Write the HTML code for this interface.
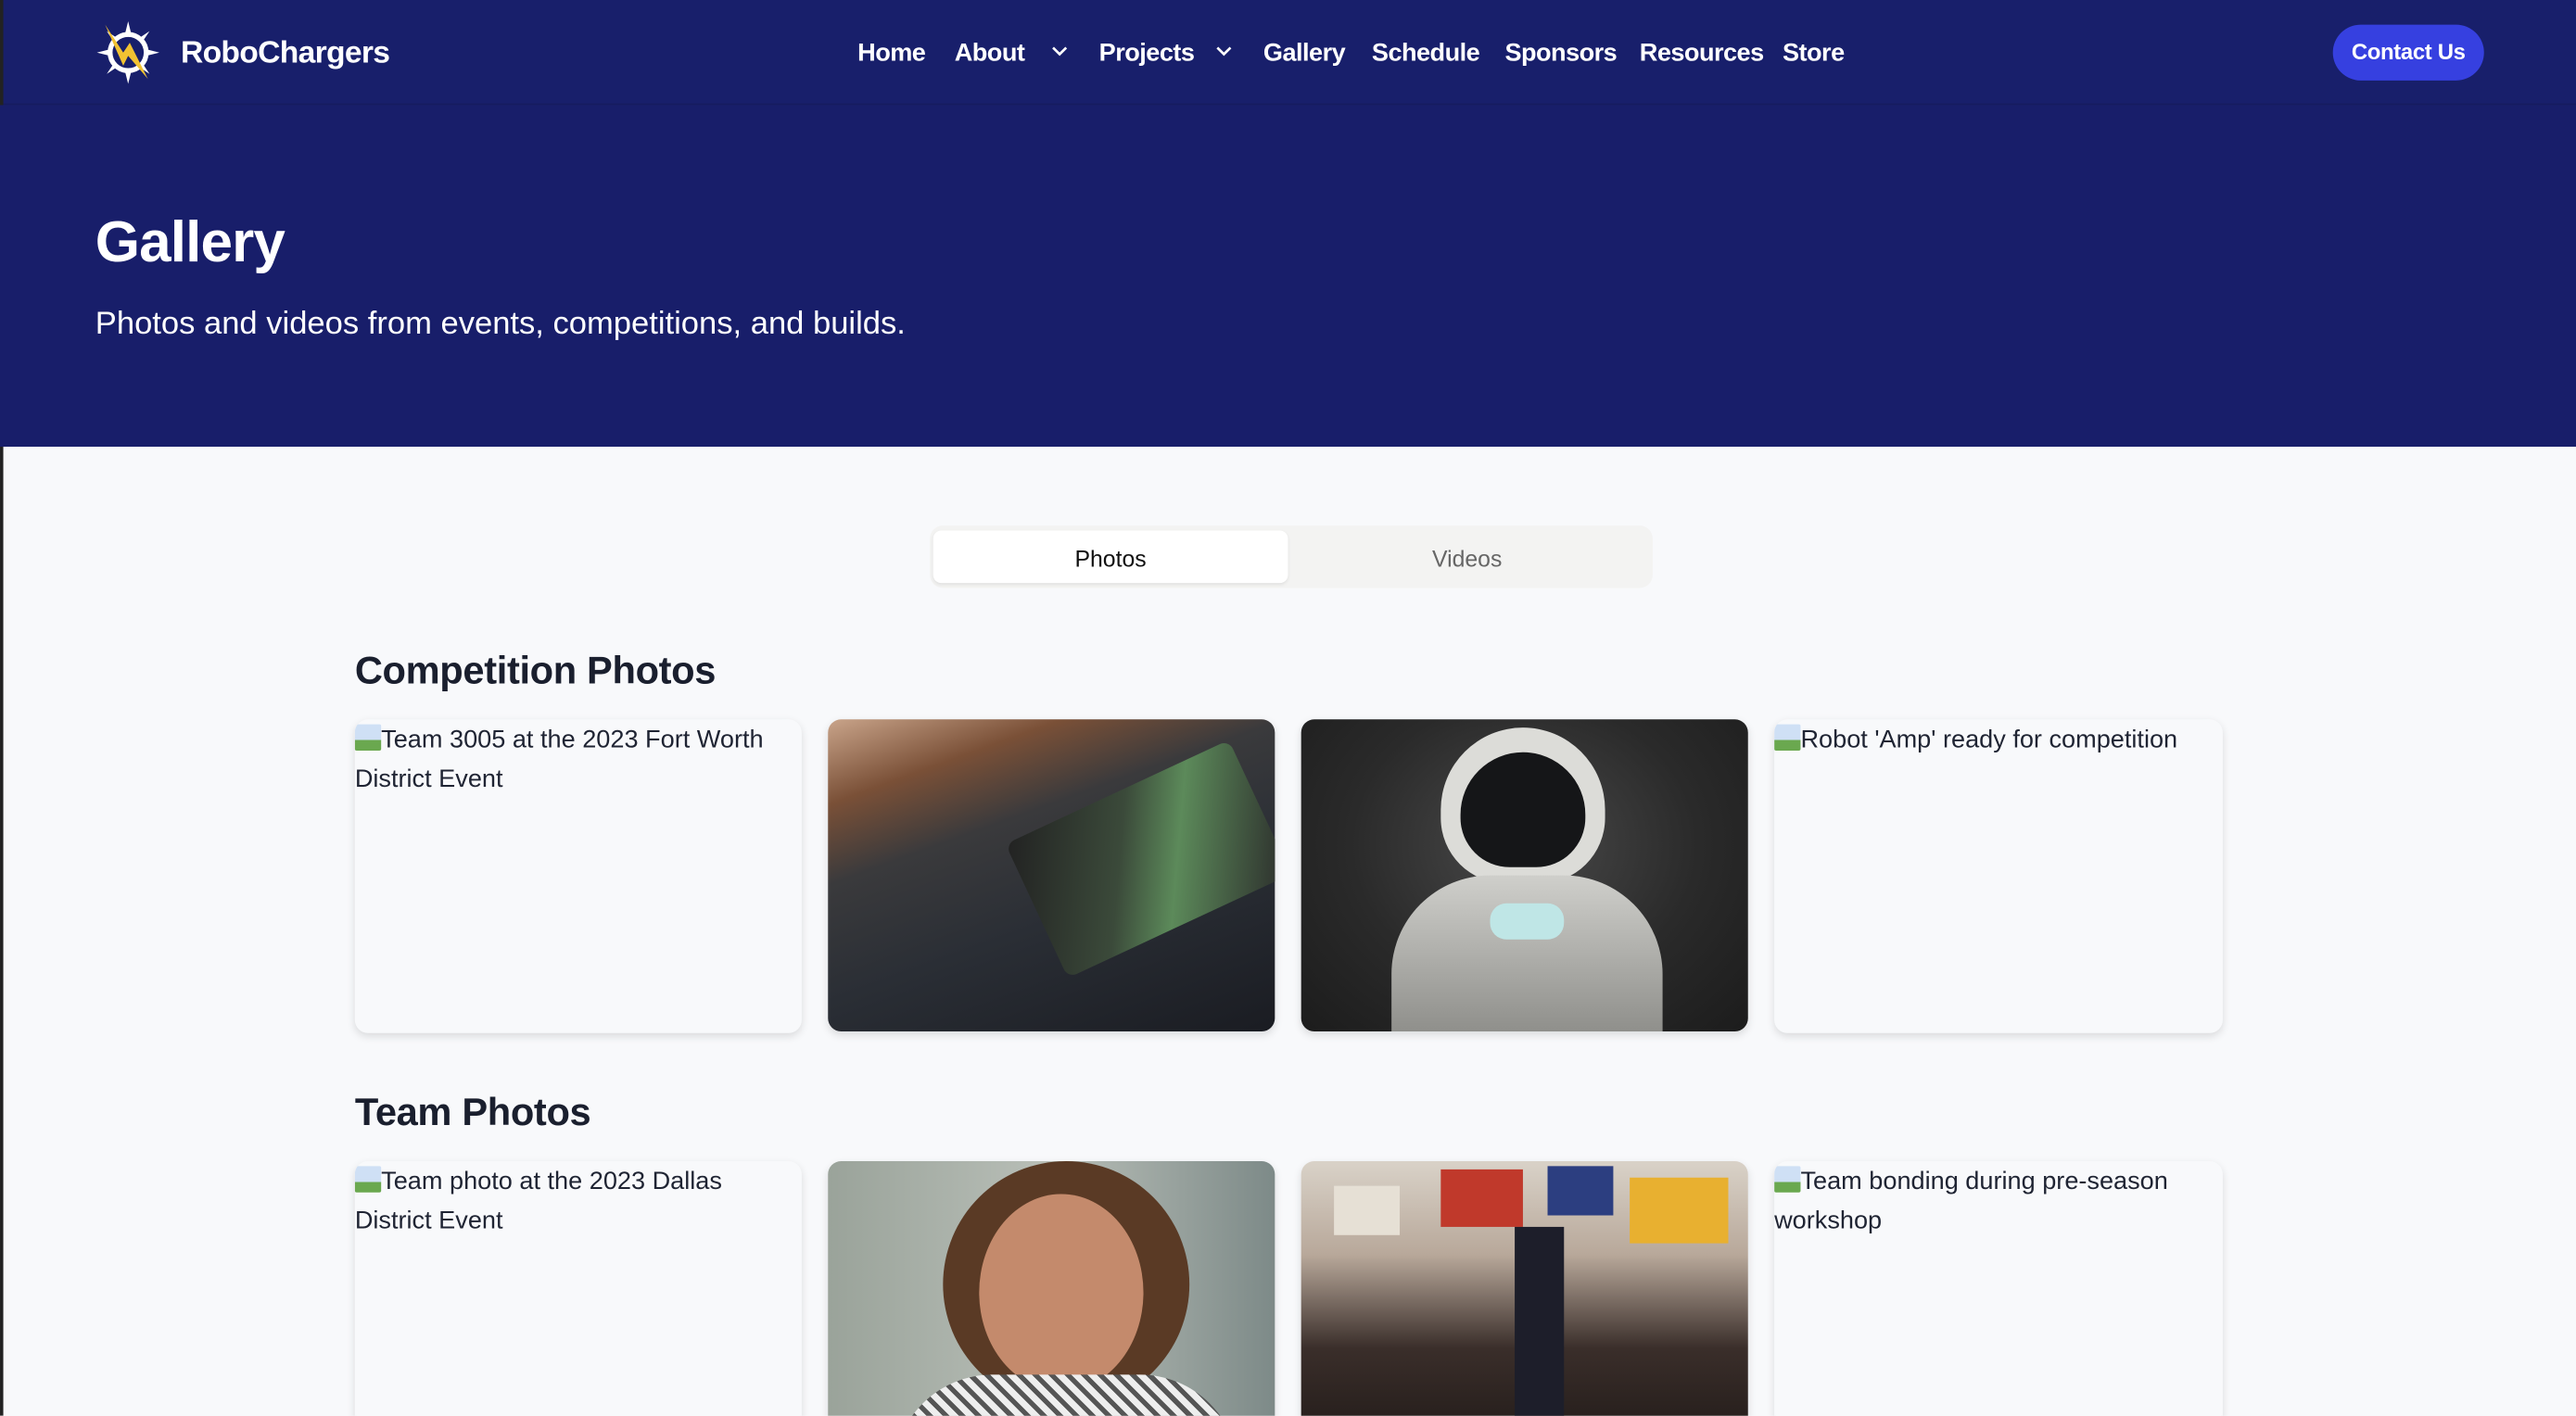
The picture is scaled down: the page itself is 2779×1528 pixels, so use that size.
<!DOCTYPE html>
<html><head><meta charset="utf-8"><style>
html,body{margin:0;padding:0;width:2779px;height:1528px;overflow:hidden;background:#f8f9fb}
#w{position:absolute;left:0;top:0;width:1568px;height:862px;transform:scale(1.77232);transform-origin:0 0;font-family:"Liberation Sans",sans-serif;background:#f8f9fb;overflow:hidden}
.nav{position:absolute;left:0;top:0;width:1568px;height:63px;background:#181f6b;border-bottom:1px solid #161c5f}
.hero{position:absolute;left:0;top:64px;width:1568px;height:208px;background:#181e6a}
.strip{position:absolute;left:0;top:0;width:2px;height:862px;background:#222}
.a{position:absolute;white-space:nowrap}
.nl{color:#fff;font-size:15.3px;font-weight:bold;top:24px;letter-spacing:-0.3px}
.card{position:absolute;width:272px;height:190px;border-radius:8px;box-shadow:0 2px 5px rgba(0,0,0,.12);background:#f8f9fb;overflow:hidden}
.alt{font-size:15.3px;color:#1f2433;line-height:24px;padding-top:1px}
.h2{font-size:23.5px;font-weight:bold;color:#1a1f2e;letter-spacing:-0.2px}
.bi{display:inline-block;width:16px;height:16px;vertical-align:-2px;background:linear-gradient(#cfe0f5 60%,#6aa84f 60%);border-radius:1px}
</style></head><body><div id="w">
<div class="nav"></div>
<div class="strip"></div>
<svg class="a" style="left:58px;top:12px" width="40" height="40" viewBox="0 0 40 40">
<g fill="#fff"><circle cx="20" cy="20" r="11" fill="none" stroke="#fff" stroke-width="3"/>
<polygon points="20,1 22,9 18,9"/><polygon points="20,39 22,31 18,31"/><polygon points="1,20 9,22 9,18"/><polygon points="39,20 31,22 31,18"/>
<polygon points="7,7 13,11 11,13"/><polygon points="33,33 27,29 29,27"/><polygon points="33,7 29,13 27,11"/><polygon points="7,33 11,27 13,29"/></g>
<polygon points="6,3 17,20 21,14 32,36 20,22 17,28" fill="#f1c232"/></svg>
<div class="a" style="left:110px;top:22px;color:#fff;font-size:19px;font-weight:bold;letter-spacing:-0.4px">RoboChargers</div>
<div class="a nl" style="left:522px">Home</div>
<div class="a nl" style="left:581px">About</div>
<svg class="a" style="left:640px;top:27px" width="10" height="8" viewBox="0 0 10 8"><path d="M1 2l4 4 4-4" fill="none" stroke="#fff" stroke-width="1.5"/></svg>
<div class="a nl" style="left:669px">Projects</div>
<svg class="a" style="left:740px;top:27px" width="10" height="8" viewBox="0 0 10 8"><path d="M1 2l4 4 4-4" fill="none" stroke="#fff" stroke-width="1.5"/></svg>
<div class="a nl" style="left:769px">Gallery</div>
<div class="a nl" style="left:835px">Schedule</div>
<div class="a nl" style="left:916px">Sponsors</div>
<div class="a nl" style="left:998px">Resources</div>
<div class="a nl" style="left:1085px">Store</div>
<div class="a" style="left:1420px;top:15px;width:92px;height:34px;border-radius:17px;background:#3640e0;color:#fff;font-size:13.5px;font-weight:bold;text-align:center;line-height:34px;letter-spacing:-0.2px">Contact Us</div>
<div class="hero"></div>
<div class="a" style="left:58px;top:128px;color:#fff;font-size:35px;font-weight:bold;letter-spacing:-0.5px">Gallery</div>
<div class="a" style="left:58px;top:186px;color:#fff;font-size:19.5px">Photos and videos from events, competitions, and builds.</div>
<div class="a" style="left:566px;top:320px;width:440px;height:38px;border-radius:8px;background:#f3f3f2"></div>
<div class="a" style="left:568px;top:323px;width:216px;height:32px;border-radius:5px;background:#fff;box-shadow:0 1px 2px rgba(0,0,0,.08);text-align:center;line-height:34px;font-size:14px;color:#111">Photos</div>
<div class="a" style="left:785px;top:323px;width:216px;height:32px;text-align:center;line-height:34px;font-size:14px;color:#666">Videos</div>
<div class="a h2" style="left:216px;top:395px">Competition Photos</div>
<div class="card alt" style="left:216px;top:438px"><span class="bi"></span>Team 3005 at the 2023 Fort Worth District Event</div>
<div class="card" style="left:504px;top:438px;background:linear-gradient(160deg,#c9a48a 0%,#7a5037 18%,#3a3a3c 35%,#2a2e35 60%,#1a1c22 100%)">
<div class="a" style="left:120px;top:40px;width:150px;height:90px;background:linear-gradient(120deg,#222 0%,#3b4a3a 40%,#5c8a5a 60%,#2a2a2a 100%);transform:rotate(-25deg);border-radius:6px"></div></div>
<div class="card" style="left:792px;top:438px;background:radial-gradient(ellipse at 50% 40%,#4a4a4a 0%,#2a2a2a 55%,#1c1c1c 100%)">
<div class="a" style="left:85px;top:5px;width:100px;height:95px;border-radius:50px 50px 40px 40px;background:#dcdcd8"></div>
<div class="a" style="left:97px;top:20px;width:76px;height:70px;border-radius:38px 38px 30px 30px;background:#151618"></div>
<div class="a" style="left:55px;top:95px;width:165px;height:100px;border-radius:60px 60px 0 0;background:linear-gradient(#cfcfcb,#8c8c88)"></div>
<div class="a" style="left:115px;top:112px;width:45px;height:22px;border-radius:10px;background:#bfe6e6"></div></div>
<div class="card alt" style="left:1080px;top:438px;width:273px"><span class="bi"></span>Robot 'Amp' ready for competition</div>
<div class="a h2" style="left:216px;top:664px">Team Photos</div>
<div class="card alt" style="left:216px;top:707px"><span class="bi"></span>Team photo at the 2023 Dallas District Event</div>
<div class="card" style="left:504px;top:707px;background:linear-gradient(90deg,#9aa39a,#b9bfb8 50%,#7d8a88)">
<div class="a" style="left:70px;top:0px;width:150px;height:150px;border-radius:50%;background:#5a3a25"></div>
<div class="a" style="left:92px;top:20px;width:100px;height:120px;border-radius:50%;background:#c48a6c"></div>
<div class="a" style="left:40px;top:130px;width:210px;height:80px;border-radius:60px 60px 0 0;background:repeating-linear-gradient(45deg,#eee 0 4px,#555 4px 7px)"></div></div>
<div class="card" style="left:792px;top:707px;background:linear-gradient(180deg,#d9d2c8 0%,#b8a89a 30%,#3a2e2a 60%,#1a1514 100%)">
<div class="a" style="left:85px;top:5px;width:50px;height:35px;background:#c0392b"></div>
<div class="a" style="left:150px;top:3px;width:40px;height:30px;background:#2c3e80"></div>
<div class="a" style="left:200px;top:10px;width:60px;height:40px;background:#e8b030"></div>
<div class="a" style="left:20px;top:15px;width:40px;height:30px;background:#e6e0d5"></div>
<div class="a" style="left:130px;top:40px;width:30px;height:120px;background:#1d1e2a"></div></div>
<div class="card alt" style="left:1080px;top:707px;width:273px"><span class="bi"></span>Team bonding during pre-season workshop</div>
</div></body></html>
